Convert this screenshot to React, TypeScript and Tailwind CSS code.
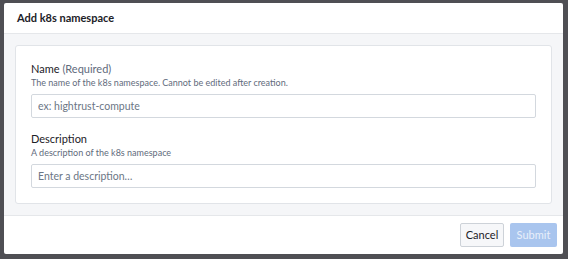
export default function App() {
  return (
    <div
      className="w-[568px] h-[259px] bg-[#4f4f54] pt-[3px] pl-[4px] pr-[5px] pb-[5px]"
      style={{ fontFamily: "Lato, 'Liberation Sans', sans-serif" }}
    >
      <div className="flex h-[251px] w-[559px] flex-col rounded-[2px] bg-white">
        <div className="flex h-[31px] shrink-0 items-center border-b border-[#e5e7ea] px-[13px]">
          <span className="text-[11px] font-bold text-[#1c2127]">Add k8s namespace</span>
        </div>

        <div className="flex-1 border-b border-[#e5e7ea] bg-[#f5f6f8] px-[11px] py-[11px]">
          <div className="rounded-[3px] border border-[#e1e4e8] bg-white px-[15px] pt-[15px] pb-[15px]">
            <div className="text-[11px] leading-[16px] text-[#1c2127]">
              Name <span className="text-[#5f6b7c]">(Required)</span>
            </div>
            <div className="text-[9px] leading-[12px] text-[#5f6b7c]">
              The name of the k8s namespace. Cannot be edited after creation.
            </div>
            <input
              className="mt-[5px] block h-[24px] w-full rounded-[2px] border border-[#d3d8de] px-[6px] text-[10.5px] text-[#1c2127] outline-none placeholder:text-[#6b7685]"
              placeholder="ex: hightrust-compute"
            />

            <div className="mt-[13px] text-[11px] leading-[16px] text-[#1c2127]">Description</div>
            <div className="text-[9px] leading-[12px] text-[#5f6b7c]">A description of the k8s namespace</div>
            <input
              className="mt-[5px] block h-[24px] w-full rounded-[2px] border border-[#d3d8de] px-[6px] text-[10.5px] text-[#1c2127] outline-none placeholder:text-[#6b7685]"
              placeholder="Enter a description…"
            />
          </div>
        </div>

        <div className="flex h-[38px] shrink-0 items-center justify-end gap-[6px] pr-[6px]">
          <button className="h-[24px] w-[44px] rounded-[2px] border border-[#cdd2d8] bg-[#f6f7f9] text-[11px] text-[#1c2127]">
            Cancel
          </button>
          <button className="h-[24px] w-[47px] rounded-[2px] bg-[#a9c5ee] text-[11px] text-[#e8effa]">
            Submit
          </button>
        </div>
      </div>
    </div>
  );
}
